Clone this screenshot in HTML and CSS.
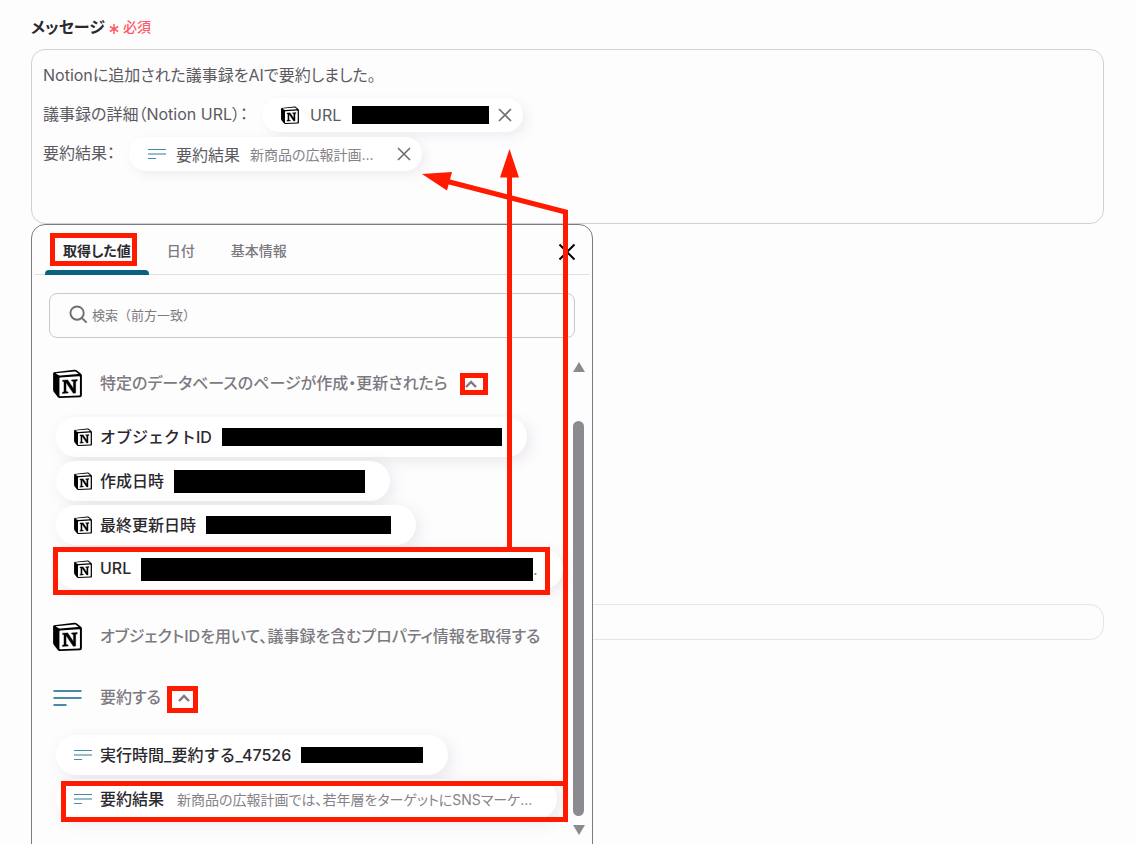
FILE: index.html
```html
<!DOCTYPE html>
<html lang="ja">
  <head>
    <meta charset="UTF-8" />
    <meta name="viewport" content="width=device-width, initial-scale=1.0" />
    <title>メッセージ</title>
    <link rel="stylesheet" href="styles.css" />
  </head>
  <body>
    <!-- shared icons -->
    <svg class="sprite" aria-hidden="true">
      <symbol id="notion" viewBox="0 0 28 28">
        <path d="M1 3.200 20.500.8c1-.1 1.600 0 2.300.5l4.200 3.200c.6.500.9.9.9 1.700v19c0 1.200-.5 1.900-1.800 2L7 28c-1 .1-1.600-.1-2.200-.8L1 22.400c-.6-.8-.9-1.400-.9-2.300V4.400C.1 3.700.4 3.300 1 3.200z" fill="#000" />
        <path d="M3 4 20.800 2.300c.6 0 .8.100 1.200.4l2.300 1.700c.3.300.2.500-.2.500L7 6.300c-.8 0-1.200-.1-1.700-.5L2.900 4.600c-.2-.2-.2-.5.1-.6z" fill="#fff" />
        <path d="M7 8.300 25 7c.7 0 1 .3 1 .9v16.600c0 .7-.3 1-1 1.100L7.200 26.400c-.7 0-1-.3-1-1V9.300c0-.6.2-.9.8-1z" fill="#fff" />
        <path d="m9.300 10.800 4.900-.3 5.500 8.300V12l-1.700-.5v-1l5.400-.3v1.100l-1.500.7v11.200l-2.300.3-7-10.500v8.700l2 .5v1l-5.500.4v-1.100l1.500-.6V12.300l-1.500-.4z" fill="#000" stroke="#000" stroke-width=".4" />
      </symbol>
      <symbol id="lines" viewBox="0 0 28 18">
        <path d="M0 2h28M0 9h28M0 16h13" fill="none" stroke="#458ba5" stroke-width="2" />
      </symbol>
      <symbol id="lines-small" viewBox="0 0 18 12">
        <path d="M0 1.500h18M0 10.500h8" fill="none" stroke="#458ba5" />
        <path d="M0 6h18" fill="none" stroke="#98bccb" stroke-width="2" />
      </symbol>
      <symbol id="cross" viewBox="0 0 16 16">
        <path d="m2 2 12 12M14 2 2 14" fill="none" stroke="currentColor" stroke-width="1.600" />
      </symbol>
      <symbol id="chevron" viewBox="0 0 14 10">
        <path d="m2 8 5-5 5 5" fill="none" stroke="currentColor" stroke-width="2.400" />
      </symbol>
    </svg>

    <main class="page">
      <div class="label" id="message-label">
        メッセージ
        <span class="required">
          <svg class="asterisk" viewBox="0 0 12 12" aria-hidden="true">
            <path d="M6 0v12M1 3l10 6M11 3 1 9" fill="none" stroke="currentColor" stroke-width="1.800" />
          </svg>
          必須
        </span>
      </div>

      <div class="field">
        <div class="message" role="textbox" aria-multiline="true" aria-labelledby="message-label" contenteditable="true" spellcheck="false">
          <div class="line">Notionに追加された議事録をAIで要約しました。</div>
          <div class="line">
            議事録の詳細（Notion URL）：
            <span class="token">
              <svg class="icon"><use href="#notion" /></svg>
              <span>URL</span>
              <span class="mask" style="width: 137px"></span>
              <button class="remove" type="button" aria-label="削除"><svg><use href="#cross" /></svg></button>
            </span>
          </div>
          <div class="line">
            要約結果：
            <span class="token token-text">
              <svg class="icon icon-lines"><use href="#lines-small" /></svg>
              <span>要約結果</span>
              <span class="sample">新商品の広報計画...</span>
              <button class="remove" type="button" aria-label="削除"><svg><use href="#cross" /></svg></button>
            </span>
          </div>
        </div>

        <section class="panel">
          <div class="tabs" role="tablist">
            <button class="tab active" type="button" role="tab" aria-selected="true">取得した値</button>
            <button class="tab" type="button" role="tab" aria-selected="false">日付</button>
            <button class="tab" type="button" role="tab" aria-selected="false">基本情報</button>
            <button class="close" type="button" aria-label="閉じる"><svg><use href="#cross" /></svg></button>
          </div>

          <div class="search">
            <svg viewBox="0 0 20 20" aria-hidden="true">
              <path d="m13.500 13.500 5 5" stroke="currentColor" stroke-width="2" />
              <circle cx="8.500" cy="8.500" r="7" fill="none" stroke="currentColor" stroke-width="2" />
            </svg>
            <input type="text" placeholder="検索（前方一致）" aria-label="検索（前方一致）" />
          </div>

          <div class="results">
            <div class="groups">
              <div class="group">
                <div class="group-head">
                  <svg class="group-icon"><use href="#notion" /></svg>
                  <span class="name">特定のデータベースのページが作成・更新されたら</span>
                  <button class="toggle" type="button" aria-label="折りたたむ"><svg><use href="#chevron" /></svg></button>
                </div>
                <div class="values">
                  <button class="value" type="button">
                    <svg class="icon"><use href="#notion" /></svg>
                    <span class="name">オブジェクトID</span>
                    <span class="mask" style="width: 280px"></span>
                  </button>
                  <button class="value" type="button">
                    <svg class="icon"><use href="#notion" /></svg>
                    <span class="name">作成日時</span>
                    <span class="mask mask-tall" style="width: 191px"></span>
                  </button>
                  <button class="value" type="button">
                    <svg class="icon"><use href="#notion" /></svg>
                    <span class="name">最終更新日時</span>
                    <span class="mask" style="width: 185px"></span>
                  </button>
                  <button class="value" type="button">
                    <svg class="icon"><use href="#notion" /></svg>
                    <span class="name">URL</span>
                    <span class="mask mask-tall" style="width: 392px"></span>
                    <span class="rest">.</span>
                  </button>
                </div>
              </div>

              <div class="group">
                <div class="group-head">
                  <svg class="group-icon"><use href="#notion" /></svg>
                  <span class="name">オブジェクトIDを用いて、議事録を含むプロパティ情報を取得する</span>
                </div>
              </div>

              <div class="group group-summary">
                <div class="group-head">
                  <svg class="group-icon group-icon-lines"><use href="#lines" /></svg>
                  <span class="name">要約する</span>
                  <button class="toggle" type="button" aria-label="折りたたむ"><svg><use href="#chevron" /></svg></button>
                </div>
                <div class="values">
                  <button class="value" type="button">
                    <svg class="icon icon-lines"><use href="#lines-small" /></svg>
                    <span class="name">実行時間_要約する_47526</span>
                    <span class="mask mask-short" style="width: 122px"></span>
                  </button>
                  <button class="value" type="button">
                    <svg class="icon icon-lines"><use href="#lines-small" /></svg>
                    <span class="name">要約結果</span>
                    <span class="sample">新商品の広報計画では、若年層をターゲットにSNSマーケ...</span>
                  </button>
                </div>
              </div>
            </div>

            <div class="scrollbar" aria-hidden="true">
              <span class="arrow-up"></span>
              <span class="track"><span class="thumb"></span></span>
              <span class="arrow-down"></span>
            </div>
          </div>
        </section>
      </div>

      <input class="next-field" type="text" aria-label="入力欄" />
    </main>

    <!-- red boxes and arrows from the list values to the tokens -->
    <svg class="marks" width="1136" height="844" viewBox="0 0 1136 844" aria-hidden="true">
      <g fill="#ff1a00" fill-rule="evenodd">
        <path d="M50 233h87v33h-87zM55 238v23h77v-23z" />
        <path d="M460 373h28v22h-28zM465 378v12h18v-12z" />
        <path d="M53 547h497v48h-497zM58 552v38h487v-38z" />
        <path d="M167 686h31v27h-31zM172 691v17h21v-17z" />
        <path d="M61 781h507v41h-507zM66 786v31h497v-31z" />
        <path d="M507 176h5v372h-5z" />
        <path d="M509.500 149 519 177.500h-19z" />
        <path d="M568 782h-5V214L447 184l1.300-5L568 210z" />
        <path d="M422 174 452 172l-5 18.500z" />
      </g>
    </svg>
  </body>
</html>
```
FILE: styles.css
```css
* {
  box-sizing: border-box;
}
html,
body {
  height: 100%;
}
body {
  margin: 0;
  overflow: hidden;
  position: relative;
  font-family: "Inter", "Noto Sans CJK JP", sans-serif;
  font-size: 16px;
  font-feature-settings: "palt";
  color: #5c5a5f;
  background-color: #fefdfe;
}
button,
input {
  font: inherit;
  font-feature-settings: inherit;
  color: inherit;
  background: none;
  border: 0;
  padding: 0;
  margin: 0;
}
svg {
  display: block;
  flex: none;
}
.sprite {
  position: absolute;
  width: 0;
  height: 0;
}
.page {
  padding: 14px 32px 0 31px;
}
.label {
  display: flex;
  align-items: center;
  gap: 4px;
  height: 24px;
  margin-bottom: 11px;
  font-weight: 700;
  color: #2b292e;
}
.required {
  display: flex;
  align-items: center;
  gap: 4px;
  font-size: 14px;
  font-weight: 500;
  color: #fb5c68;
}
.asterisk {
  width: 10px;
  height: 10px;
  margin-top: 5px;
}

/* message box */
.field {
  position: relative;
}
.message {
  min-height: 175px;
  padding: 4px 11px;
  border: 1px solid #d2d0d6;
  border-radius: 14px;
  outline: 0;
}
.line {
  display: flex;
  align-items: center;
  gap: 14px;
  height: 39px;
}
.token {
  display: flex;
  align-items: center;
  gap: 11px;
  height: 34px;
  margin-top: 4px;
  padding: 0 10px 0 19px;
  border-radius: 17px;
  background-color: #fff;
  box-shadow: 4px 4px 12px rgba(60, 40, 80, 0.08);
}
.icon {
  width: 18px;
  height: 18px;
}
.icon-lines {
  height: 12px;
}
.mask {
  height: 18px;
  background-color: #000;
}
.mask-tall {
  height: 23px;
}
.mask-short {
  height: 16px;
}
.sample {
  font-size: 14px;
  font-weight: 400;
  color: #858389;
}
.remove {
  display: flex;
  margin-left: -3px;
  color: #6f6d72;
}
.remove svg {
  width: 16px;
  height: 16px;
}
.token-text {
  gap: 10px;
}
.token-text .remove {
  margin-left: 12px;
}

/* value picker */
.panel {
  position: absolute;
  top: 100%;
  left: 0;
  z-index: 1;
  width: 562px;
  height: 660px;
  border: 1px solid #7c7a80;
  border-radius: 14px;
  background-color: #fefdfe;
}
.tabs {
  display: flex;
  height: 50px;
  margin: 0 3px;
  padding: 0 12px 0 10px;
  border-bottom: 1px solid #dfdde3;
}
.tab {
  padding: 0 18px;
  border-top: 1px solid transparent;
  font-size: 14px;
  font-weight: 500;
  color: #7c7a80;
}
.tab.active {
  position: relative;
  font-weight: 700;
  color: #2b292e;
}
.tab.active::after {
  content: "";
  position: absolute;
  left: 0;
  right: 0;
  bottom: -1px;
  height: 5px;
  border-radius: 4px 4px 0 0;
  background-color: #0a6180;
}
.close {
  margin-left: auto;
  padding-top: 5px;
  color: #000;
}
.close svg {
  width: 20px;
  height: 20px;
}
.search {
  display: flex;
  align-items: center;
  gap: 4px;
  height: 45px;
  margin: 18px 17px 15px;
  padding: 0 19px 2px;
  border: 1px solid #cac8ce;
  border-radius: 8px;
  color: #6f6d72;
}
.search svg {
  width: 19px;
  height: 19px;
}
.search input {
  flex: 1;
  font-size: 13px;
  font-feature-settings: normal;
}
.search input::placeholder {
  color: #7c7a80;
  opacity: 1;
}
.results {
  display: flex;
  justify-content: space-between;
  padding-right: 7px;
}
.groups {
  flex: 1;
  min-width: 0;
  padding-left: 21px;
}
.group-head {
  display: flex;
  align-items: center;
  height: 61px;
  font-weight: 500;
  white-space: nowrap;
  color: #7c7a80;
}
.name {
  padding-bottom: 3px;
}
.group-icon {
  width: 29px;
  height: 29px;
  margin-right: 18px;
}
.group-icon-lines {
  height: 18px;
}
.toggle {
  padding: 0 16px;
}
.toggle svg {
  width: 14px;
  height: 10px;
}
.values {
  display: flex;
  flex-direction: column;
  align-items: flex-start;
  gap: 4px;
  margin-left: -21px;
  padding: 3px 0 17px 24px;
  overflow: hidden;
}
.group-summary .values {
  padding-top: 7px;
}
.value {
  display: flex;
  align-items: center;
  gap: 8px;
  height: 40px;
  padding: 0 25px 0 18px;
  border-radius: 20px;
  font-weight: 500;
  font-feature-settings: normal;
  white-space: nowrap;
  color: #2b292e;
  background-color: #fff;
  box-shadow: 4px 4px 16px rgba(60, 40, 80, 0.1);
}
.value .mask {
  margin-left: 2px;
}
.value .sample {
  margin-left: 5px;
  font-feature-settings: "palt";
}
.rest {
  margin-left: -8px;
  font-size: 14px;
  color: #858389;
}
.scrollbar {
  display: flex;
  flex-direction: column;
  align-items: center;
  width: 13px;
  height: 482px;
  padding-top: 9px;
}
.arrow-up,
.arrow-down {
  border: 6px solid transparent;
  border-top-width: 0;
  border-bottom: 10px solid #8c8a8e;
}
.arrow-down {
  border-top: 10px solid #8c8a8e;
  border-bottom-width: 0;
}
.track {
  flex: 1;
  width: 11px;
  padding: 49px 0 9px;
}
.thumb {
  display: block;
  height: 100%;
  border-radius: 6px;
  background-color: #8c8a8e;
}

.next-field {
  display: block;
  width: 100%;
  height: 36px;
  margin-top: 380px;
  padding: 0 12px;
  border: 1px solid #e6e4ea;
  border-radius: 14px;
}
.marks {
  position: absolute;
  top: 0;
  left: 0;
  z-index: 2;
  pointer-events: none;
}
```
